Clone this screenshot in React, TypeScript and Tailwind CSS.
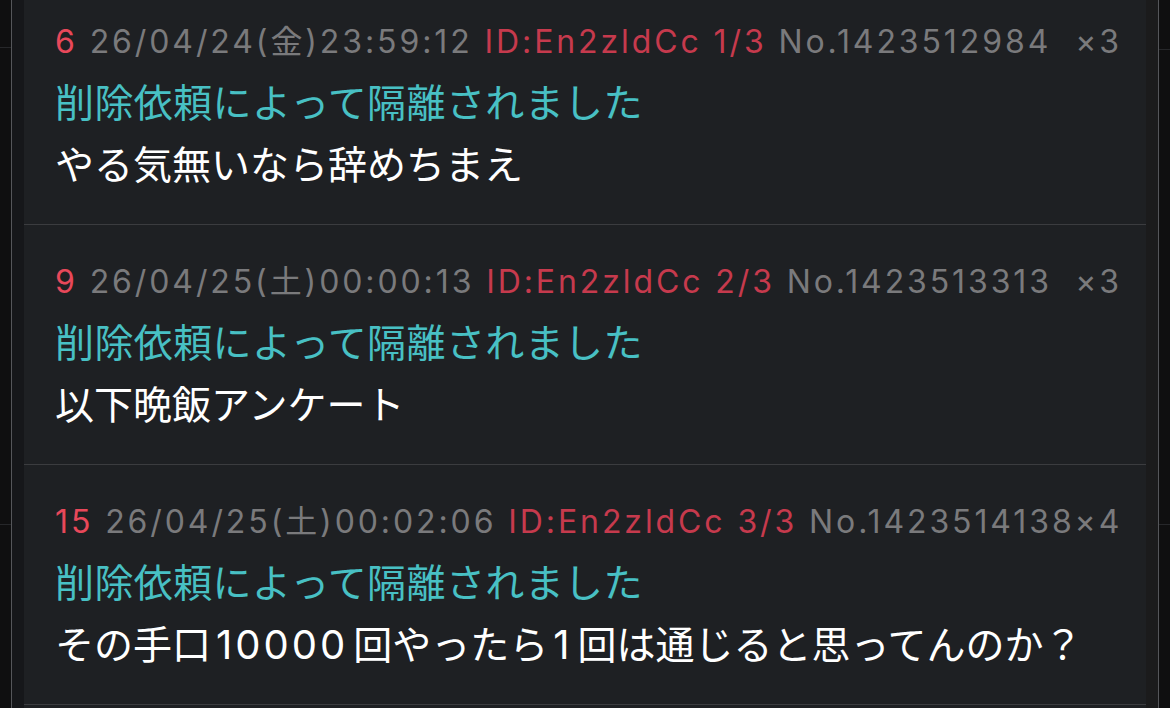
import React from 'react';

type Post = {
  num: string;
  date: string;
  id: string;
  count: string;
  no: string;
  refs: string;
  body: string;
};

const posts: Post[] = [
  { num: '6', date: '26/04/24(金)23:59:12', id: 'ID:En2zldCc', count: '1/3', no: 'No.1423512984', refs: '×3', body: 'やる気無いなら辞めちまえ' },
  { num: '9', date: '26/04/25(土)00:00:13', id: 'ID:En2zldCc', count: '2/3', no: 'No.1423513313', refs: '×3', body: '以下晩飯アンケート' },
  { num: '15', date: '26/04/25(土)00:02:06', id: 'ID:En2zldCc', count: '3/3', no: 'No.1423514138', refs: '×4', body: 'その手口10000回やったら1回は通じると思ってんのか？' },
];

const font = { fontFamily: 'Inter, "Noto Sans CJK JP", sans-serif' };

// digits in the body are set a bit wider, like the system font does
function Body({ text }: { text: string }) {
  const parts = text.split(/(\d+)/);
  return (
    <>
      {parts.map((s, i) =>
        /^\d+$/.test(s) ? (
          <span key={i} className="text-[40px] tracking-[3px] mx-[5px]">{s}</span>
        ) : (
          <span key={i}>{s}</span>
        )
      )}
    </>
  );
}

function PostItem({ post }: { post: Post; key?: string }) {
  return (
    <div className="pt-[35px] pb-[28px] pl-[31px] pr-[24px] border-b border-[#3b3c3f]">
      <div className="flex justify-between items-center h-[44px] text-[32px] leading-[44px] tracking-[2.9px] whitespace-nowrap">
        <div>
          <span className="text-[#e8485a]">{post.num}</span>
          <span className="text-[#7a7a7c]"> {post.date} </span>
          <span className="text-[#c63a4d]">{post.id} {post.count}</span>
          <span className="text-[#7a7a7c]"> {post.no}</span>
        </div>
        <span className="text-[#7a7a7c]">{post.refs}</span>
      </div>
      <div className="mt-[8px] text-[39px] leading-[62px] tracking-[0.4px] text-[#48c0c4]">削除依頼によって隔離されました</div>
      <div className="text-[39px] leading-[62px] text-white"><Body text={post.body} /></div>
    </div>
  );
}

export default function App() {
  return (
    <div className="w-[1170px] h-[708px] overflow-hidden flex bg-[#0f0f10]" style={font}>
      {/* left gutter */}
      <div className="w-[11px] flex flex-col">
        <div className="h-[48px] border-b border-[#26272a]" />
        <div className="h-[477px] border-b border-[#26272a]" />
      </div>
      <div className="w-[1px] bg-[#55565a]" />
      <div className="w-[12px] bg-[#16171a]" />

      {/* thread panel */}
      <div className="w-[1122px] bg-[#1e2023] -mt-[15px] self-start">
        {posts.map(p => (
          <PostItem key={p.num} post={p} />
        ))}
        <div className="h-[40px]" />
      </div>

      {/* right gutter */}
      <div className="w-[12px] bg-[#1b1b1c]" />
      <div className="w-[1px] bg-[#55565a]" />
      <div className="flex-1 flex flex-col">
        <div className="h-[50px] border-b border-[#26272a]" />
        <div className="h-[475px] border-b border-[#26272a]" />
      </div>
    </div>
  );
}
